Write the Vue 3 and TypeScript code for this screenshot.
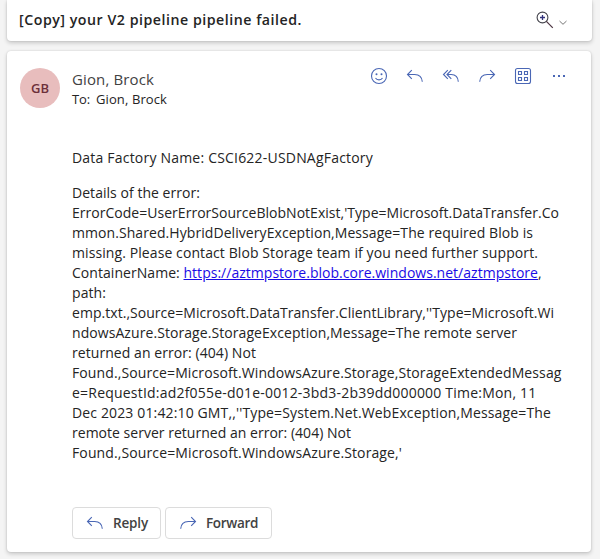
<script setup lang="ts">
import type { Directive } from 'vue'

interface Line {
  text: string
  width: number
  link?: string
  linkWidth?: number
  tail?: string
}

const details: Line[] = [
  { text: 'Details of the error:', width: 128 },
  { text: "ErrorCode=UserErrorSourceBlobNotExist,'Type=Microsoft.DataTransfer.Co", width: 487 },
  { text: 'mmon.Shared.HybridDeliveryException,Message=The required Blob is', width: 461 },
  { text: 'missing. Please contact Blob Storage team if you need further support.', width: 466 },
  {
    text: 'ContainerName: ',
    width: 111.5,
    link: 'https://aztmpstore.blob.core.windows.net/aztmpstore',
    linkWidth: 354.5,
    tail: ',',
  },
  { text: 'path:', width: 34 },
  { text: "emp.txt.,Source=Microsoft.DataTransfer.ClientLibrary,''Type=Microsoft.Wi", width: 482 },
  { text: 'ndowsAzure.Storage.StorageException,Message=The remote server', width: 445 },
  { text: 'returned an error: (404) Not', width: 184 },
  { text: 'Found.,Source=Microsoft.WindowsAzure.Storage,StorageExtendedMessag', width: 489.5 },
  { text: 'e=RequestId:ad2f055e-d01e-0012-3bd3-2b39dd000000 Time:Mon, 11', width: 464.5 },
  { text: "Dec 2023 01:42:10 GMT,,''Type=System.Net.WebException,Message=The", width: 479 },
  { text: 'remote server returned an error: (404) Not', width: 279 },
  { text: "Found.,Source=Microsoft.WindowsAzure.Storage,'", width: 330 },
]

// Tracks a run of text so that it fills the given measure.
const vFit: Directive<HTMLElement, number> = {
  mounted(el, { value }) {
    const count = (el.textContent ?? '').length
    const natural = el.getBoundingClientRect().width
    if (count > 0) el.style.letterSpacing = `${(value - natural) / count}px`
  },
}
</script>

<template>
  <main class="pane">
    <header class="card subject">
      <h1><span v-fit="283">[Copy] your V2 pipeline pipeline failed.</span></h1>
      <button class="zoom" aria-label="Zoom">
        <svg width="32" height="20" viewBox="0 0 32 20" fill="none">
          <circle cx="6.5" cy="7.5" r="5.4" stroke="#44444c" stroke-width="1.1" />
          <path d="M4 7.5h5M6.5 5v5" stroke="#33337c" stroke-width="1.3" />
          <path d="M10.4 11.4l6.4 6.4" stroke="#4a3340" stroke-width="1.2" />
          <path d="M23.5 11l3.5 3.3 3.5-3.3" stroke="#777" />
        </svg>
      </button>
    </header>

    <article class="card message">
      <div class="avatar"><span v-fit="18">GB</span></div>
      <div class="content">
        <div class="top">
          <div class="people">
            <div class="sender"><span v-fit="82">Gion, Brock</span></div>
            <div class="to"><span v-fit="18">To:</span><span v-fit="71">Gion, Brock</span></div>
          </div>
          <nav class="actions">
            <svg width="18" height="18" viewBox="0 0 18 18">
              <circle cx="9" cy="9" r="7.5" />
              <path d="M5.5 11c1.4 2.5 5.6 2.5 7 0" />
              <circle class="dot" cx="6.5" cy="7.2" r="1" />
              <circle class="dot" cx="11.5" cy="7.2" r="1" />
            </svg>
            <svg width="18" height="18" viewBox="0 0 18 18">
              <path d="M5.8 3.2L1.5 7.5l4.3 4.3M1.5 7.5h7.2c4.5 0 7.2 2.5 7.6 7.2" />
            </svg>
            <svg width="18" height="18" viewBox="0 0 18 18">
              <path d="M5.8 3.2L1.5 7.5l4.3 4.3M9.3 3.2L5 7.5l4.3 4.3M5 7.5h4.2c4.3 0 6.8 2.5 7.1 7.2" />
            </svg>
            <svg width="18" height="18" viewBox="0 0 18 18">
              <path d="M12.2 3.2l4.3 4.3-4.3 4.3M16.5 7.5H9.3C4.8 7.5 2.1 10 1.7 14.7" />
            </svg>
            <svg width="18" height="18" viewBox="0 0 18 18">
              <rect x="1.5" y="1.5" width="15" height="15" rx="2" />
              <path d="M4.5 4.5h3v3h-3zM10.5 4.5h3v3h-3zM4.5 10.5h3v3h-3zM10.5 10.5h3v3h-3z" />
            </svg>
            <svg width="18" height="18" viewBox="0 0 18 18">
              <path class="dot" d="M3 8h2v2H3zM8 8h2v2H8zM13 8h2v2h-2z" />
            </svg>
          </nav>
        </div>

        <div class="body">
          <p><span v-fit="301">Data Factory Name: CSCI622-USDNAgFactory</span></p>
          <p>
            <span v-for="(line, i) in details" :key="i" class="line">
              <span v-fit="line.width">{{ line.text }}</span>
              <a v-if="line.link" v-fit="line.linkWidth ?? 0" href="#">{{ line.link }}</a>
              <span v-if="line.tail">{{ line.tail }}</span>
            </span>
          </p>
        </div>

        <footer class="replies">
          <button class="reply">
            <svg width="18" height="18" viewBox="0 0 18 18">
              <path d="M5.8 3.2L1.5 7.5l4.3 4.3M1.5 7.5h7.2c4.5 0 7.2 2.5 7.6 7.2" />
            </svg>
            <span v-fit="35">Reply</span>
          </button>
          <button class="reply forward">
            <svg width="18" height="18" viewBox="0 0 18 18">
              <path d="M12.2 3.2l4.3 4.3-4.3 4.3M16.5 7.5H9.3C4.8 7.5 2.1 10 1.7 14.7" />
            </svg>
            <span v-fit="52">Forward</span>
          </button>
        </footer>
      </div>
    </article>
  </main>
</template>

<style>
body {
  margin: 0;
  background: #f4f4f4;
}
</style>

<style scoped>
.pane {
  box-sizing: border-box;
  height: 559px;
  padding: 0 8px 7px 7px;
  display: flex;
  flex-direction: column;
  gap: 10px;
  overflow: hidden;
  background: #f4f4f4;
  font-family: 'Open Sans', 'Noto Sans', sans-serif;
  color: #242424;
}
.card {
  box-sizing: border-box;
  background: #fff;
  box-shadow: 0 0 2px rgba(0, 0, 0, 0.14), 0 2px 4px rgba(0, 0, 0, 0.18);
}
.subject {
  flex: none;
  height: 41px;
  padding: 0 24px 2px 12px;
  display: flex;
  align-items: center;
  justify-content: space-between;
  border-radius: 0 0 4px 4px;
}
h1 {
  margin: 0;
  padding-top: 1px;
  font-size: 14.2px;
  font-weight: 550;
  line-height: 20px;
  white-space: nowrap;
}
.zoom {
  display: flex;
  padding: 0;
  border: 0;
  background: none;
}
.message {
  flex: 1;
  width: 584px;
  border-radius: 4px;
  display: flex;
  gap: 12px;
  padding: 16px 23px 13px 13px;
}
.avatar {
  flex: none;
  width: 40px;
  height: 40px;
  margin-top: 1px;
  border-radius: 50%;
  background: #e8bdbd;
  color: #6d2f3a;
  display: flex;
  align-items: center;
  justify-content: center;
  font-size: 13px;
  font-weight: 550;
}
.content {
  flex: 1;
  min-width: 0;
  display: flex;
  flex-direction: column;
}
.top {
  display: flex;
  justify-content: space-between;
}
.people {
  padding-top: 1px;
  white-space: nowrap;
}
.sender {
  font-size: 15px;
  line-height: 22px;
  color: #424242;
}
.to {
  display: flex;
  gap: 6px;
  font-size: 13px;
  line-height: 18px;
}
.actions {
  display: flex;
  align-items: flex-start;
  gap: 18px;
}
svg {
  display: block;
  flex: none;
}
.actions svg,
.reply svg {
  fill: none;
  stroke: #4a67b5;
  stroke-width: 1.1;
}
svg .dot {
  fill: #4a67b5;
  stroke: none;
}
.body {
  padding-top: 40px;
  font-size: 14px;
  line-height: 20px;
  white-space: nowrap;
}
p {
  margin: 0 0 15px;
}
.line {
  display: flex;
  white-space: pre;
}
a {
  color: #1a0be5;
  text-decoration: underline;
}
.replies {
  display: flex;
  gap: 4px;
  margin-top: auto;
}
.reply {
  box-sizing: border-box;
  width: 89px;
  height: 32px;
  padding: 0 13px;
  display: flex;
  align-items: center;
  gap: 9px;
  border: 1px solid #dcdcdc;
  border-radius: 4px;
  background: #fff;
  color: #424242;
  font: 550 13.5px 'Open Sans', 'Noto Sans', sans-serif;
}
.forward {
  width: 107px;
}
</style>
